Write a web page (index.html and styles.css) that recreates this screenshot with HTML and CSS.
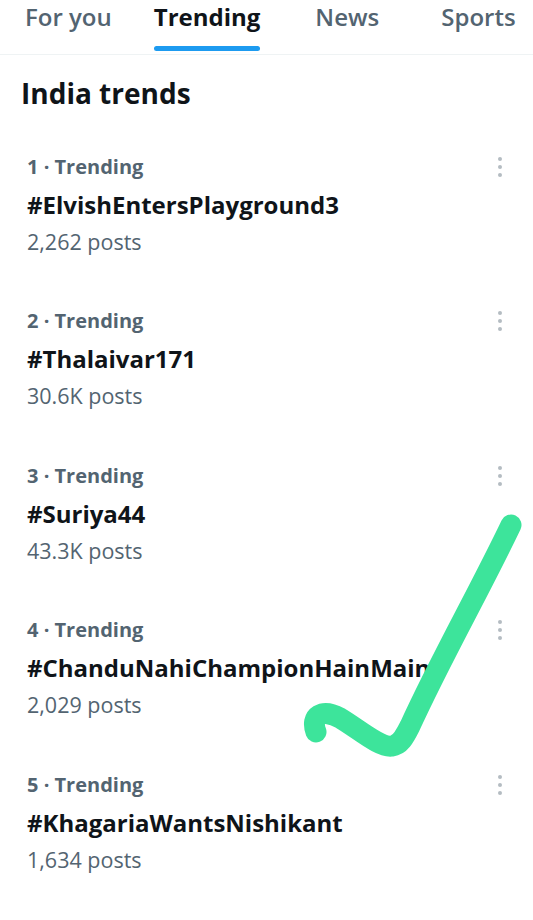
FILE: index.html
```html
<!DOCTYPE html>
<html>
<head>
<meta charset="utf-8">
<link rel="stylesheet" href="styles.css">
</head>
<body>
<div class="page">
  <nav class="tabs">
    <div class="tab t1">For you</div>
    <div class="tab t2 active">Trending<span class="bar"></span></div>
    <div class="tab t3">News</div>
    <div class="tab t4">Sports</div>
  </nav>
  <h1 class="title">India trends</h1>
  <ul class="list">
    <li class="item">
      <div class="meta">1 · Trending</div>
      <div class="tag">#ElvishEntersPlayground3</div>
      <div class="count">2,262 posts</div>
      <span class="more"><i></i><i></i><i></i></span>
    </li>
    <li class="item">
      <div class="meta">2 · Trending</div>
      <div class="tag">#Thalaivar171</div>
      <div class="count">30.6K posts</div>
      <span class="more"><i></i><i></i><i></i></span>
    </li>
    <li class="item">
      <div class="meta">3 · Trending</div>
      <div class="tag">#Suriya44</div>
      <div class="count">43.3K posts</div>
      <span class="more"><i></i><i></i><i></i></span>
    </li>
    <li class="item">
      <div class="meta">4 · Trending</div>
      <div class="tag">#ChanduNahiChampionHainMain</div>
      <div class="count">2,029 posts</div>
      <span class="more"><i></i><i></i><i></i></span>
    </li>
    <li class="item">
      <div class="meta">5 · Trending</div>
      <div class="tag">#KhagariaWantsNishikant</div>
      <div class="count">1,634 posts</div>
      <span class="more"><i></i><i></i><i></i></span>
    </li>
  </ul>
  <svg class="check" width="533" height="920" viewBox="0 0 533 920">
    <path d="M316 732 C310 716 322 708 340 718 C360 730 380 748 392 746 C400 745 404 738 410 726 C440 660 480 590 511 525" fill="none" stroke="#3de49b" stroke-width="21" stroke-linecap="round" stroke-linejoin="round"/>
  </svg>
</div>
</body>
</html>
```
FILE: styles.css
```css
* { box-sizing: border-box; }
html, body { margin: 0; padding: 0; background: #fff; }
body { font-family: "Open Sans", "Noto Sans", "Liberation Sans", sans-serif; color: #0f1419; }
.page { position: relative; width: 533px; height: 920px; overflow: hidden; }
.tabs {
  display: flex;
  height: 55px;
  border-bottom: 1px solid #eff3f4;
  padding-left: 25px;
}
.tab {
  position: relative;
  font-size: 24px;
  font-weight: 600;
  color: #536471;
  line-height: 34px;
  white-space: nowrap;
}
.t1 { margin-right: 42px; }
.t2 { margin-right: 55px; }
.t3 { margin-right: 62px; }
.tab.active { color: #0f1419; font-weight: 700; }
.bar {
  position: absolute;
  left: 0; right: 0;
  top: 46px;
  height: 5px;
  border-radius: 3px;
  background: #1d9bf0;
}
.title {
  margin: 0;
  padding: 20px 21px 0;
  font-size: 28px;
  font-weight: 700;
  line-height: 36px;
  height: 98px;
}
.list { list-style: none; margin: 0; padding: 0; }
.item {
  position: relative;
  height: 154.4px;
  padding: 0 27px;
}
.meta { font-size: 20px; font-weight: 700; color: #536471; line-height: 28px; }
.tag { font-size: 24px; font-weight: 700; color: #0f1419; line-height: 30px; margin-top: 9px; white-space: nowrap; }
.count { font-size: 21.5px; color: #536471; line-height: 28px; margin-top: 8px; }
.more {
  position: absolute;
  right: 31px;
  top: 4px;
  display: flex;
  flex-direction: column;
  gap: 4px;
}
.more i { display: block; width: 4px; height: 4px; border-radius: 50%; background: #b4bcc2; }
.check { position: absolute; left: 0; top: 0; pointer-events: none; }
```
